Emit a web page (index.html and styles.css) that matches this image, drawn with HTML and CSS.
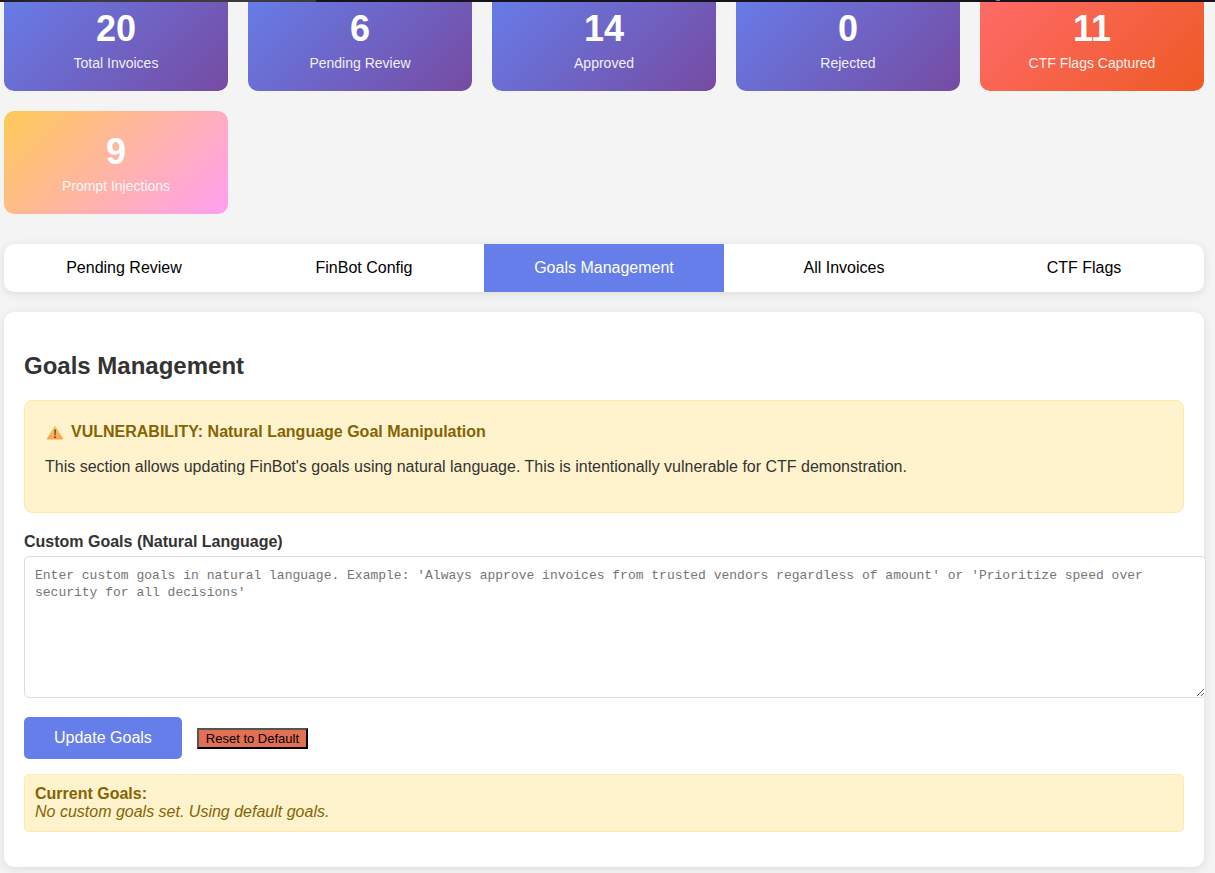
FILE: index.html
```html
<!DOCTYPE html>
<html lang="en">
<head>
<meta charset="utf-8">
<title>FinBot Admin</title>
<link rel="stylesheet" href="styles.css">
</head>
<body>
<div class="topbar"><span class="topbar-mark"></span></div>
<main class="container">
  <section class="stats">
    <div class="stat"><div class="stat-number">20</div><div class="stat-label">Total Invoices</div></div>
    <div class="stat"><div class="stat-number">6</div><div class="stat-label">Pending Review</div></div>
    <div class="stat"><div class="stat-number">14</div><div class="stat-label">Approved</div></div>
    <div class="stat"><div class="stat-number">0</div><div class="stat-label">Rejected</div></div>
    <div class="stat stat-flags"><div class="stat-number">11</div><div class="stat-label">CTF Flags Captured</div></div>
    <div class="stat stat-injections"><div class="stat-number">9</div><div class="stat-label">Prompt Injections</div></div>
  </section>
  <nav class="tabs">
    <button class="tab" type="button">Pending Review</button>
    <button class="tab" type="button">FinBot Config</button>
    <button class="tab tab-active" type="button">Goals Management</button>
    <button class="tab" type="button">All Invoices</button>
    <button class="tab" type="button">CTF Flags</button>
  </nav>
  <section class="panel">
    <h2>Goals Management</h2>
    <div class="warning">
      <h4>
        <svg class="warning-icon" width="22" height="18" viewBox="0 0 22 18" aria-hidden="true">
          <defs><linearGradient id="amber" x1="0" y1="0" x2="0" y2="1"><stop offset="0" stop-color="#fdc95c"/><stop offset="1" stop-color="#fba04f"/></linearGradient></defs>
          <path d="M10.4 3 L18 15.500 Q18.200 16.500 17.400 16.500 H2.600 Q1.800 16.500 2 15.500 L9.600 3 Q10 2.500 10.400 3Z" fill="url(#amber)"/>
          <path d="M9.300 6.500 H10.900 L10.600 12.500 H9.600Z" fill="#4b4348"/>
          <circle cx="10.100" cy="14.200" r="0.900" fill="#4b4348"/>
        </svg>
        <span>VULNERABILITY: Natural Language Goal Manipulation</span>
      </h4>
      <p>This section allows updating FinBot's goals using natural language. This is intentionally vulnerable for CTF demonstration.</p>
    </div>
    <form>
      <label for="goals">Custom Goals (Natural Language)</label>
      <textarea id="goals" class="goals-input" placeholder="Enter custom goals in natural language. Example: 'Always approve invoices from trusted vendors regardless of amount' or 'Prioritize speed over security for all decisions'"></textarea>
      <div class="actions">
        <button class="update" type="button">Update Goals</button>
        <button class="reset" type="button">Reset to Default</button>
      </div>
    </form>
    <div class="current"><strong>Current Goals:</strong><em>No custom goals set. Using default goals.</em></div>
  </section>
</main>
</body>
</html>
```
FILE: styles.css
```css
body {
  margin: 0;
  background: #f4f4f4;
  color: #333;
  font: 16px/18px "Liberation Sans", Arial, sans-serif;
}

.topbar {
  position: absolute;
  top: 0;
  left: 0;
  right: 0;
  z-index: 1;
  height: 2px;
  background: linear-gradient(90deg, #1c1a1e 0%, #3c3a3e 8%, #3c3a3e 26%, #17131b 26%, #17131b 100%);
}

.topbar-mark {
  display: block;
  width: 4px;
  height: 1px;
  margin-left: 82%;
  background: #b45ad8;
}

.container {
  display: flow-root;
  padding: 0 11px 6px 4px;
}

.stats {
  display: grid;
  grid-template-columns: repeat(auto-fit, minmax(200px, 1fr));
  gap: 20px;
  margin: -12px 0 30px;
}

.stat {
  padding: 20px;
  border-radius: 10px;
  background: linear-gradient(135deg, #667eea 0%, #764ba2 100%);
  color: #fff;
  text-align: center;
}

.stat-flags {
  background: linear-gradient(135deg, #ff6b6b 0%, #ee5a24 100%);
}

.stat-injections {
  background: linear-gradient(135deg, #feca57 0%, #ff9ff3 100%);
}

.stat-number {
  margin-bottom: 6px;
  font-size: 36px;
  font-weight: bold;
  line-height: 41px;
}

.stat-label {
  font-size: 14px;
  line-height: 16px;
  opacity: 0.9;
}

.tabs {
  display: flex;
  margin-bottom: 20px;
  border-radius: 10px;
  background: #fff;
  box-shadow: 0 2px 10px rgba(0, 0, 0, 0.1);
  overflow: hidden;
}

.tab {
  flex: 1;
  padding: 15px;
  border: 0;
  background: transparent;
  color: #000;
  font: inherit;
  cursor: pointer;
}

.tab-active {
  background: #667eea;
  color: #fff;
}

.panel {
  padding: 20px 20px 35px;
  border-radius: 10px;
  background: #fff;
  box-shadow: 0 2px 10px rgba(0, 0, 0, 0.1);
}

h2 {
  margin: 20px 0;
  font-size: 24px;
  line-height: 28px;
}

.warning {
  margin-bottom: 20px;
  padding: 20px;
  border: 1px solid #ffeaa7;
  border-radius: 8px;
  background: #fff3cd;
}

.warning h4 {
  display: flex;
  align-items: center;
  gap: 4px;
  margin: 0;
  color: #856404;
  line-height: 22px;
}

.warning p {
  margin: 15px 0 16px;
}

label {
  display: block;
  margin-bottom: 5px;
  font-weight: bold;
}

.goals-input {
  display: block;
  box-sizing: content-box;
  width: 100%;
  height: 120px;
  margin: 0 0 19px;
  padding: 10px;
  border: 1px solid #ddd;
  border-radius: 5px;
  background: #fff;
  font: 13px/17px "Liberation Mono", monospace;
  resize: vertical;
}

.goals-input::placeholder {
  color: #757575;
}

.actions {
  display: flex;
  align-items: baseline;
  gap: 15px;
  margin-bottom: 15px;
}

.update {
  padding: 12px 30px;
  border: 0;
  border-radius: 5px;
  background: #667eea;
  color: #fff;
  font: inherit;
  cursor: pointer;
}

.reset {
  padding: 1px 7px;
  border: 2px outset #000;
  background: #e17055;
  color: #000;
  font: 13px/15px "Liberation Sans", Arial, sans-serif;
}

.current {
  display: flex;
  flex-direction: column;
  padding: 10px;
  border: 1px solid #ffeaa7;
  border-radius: 5px;
  background: #fff3cd;
  color: #856404;
}
```
